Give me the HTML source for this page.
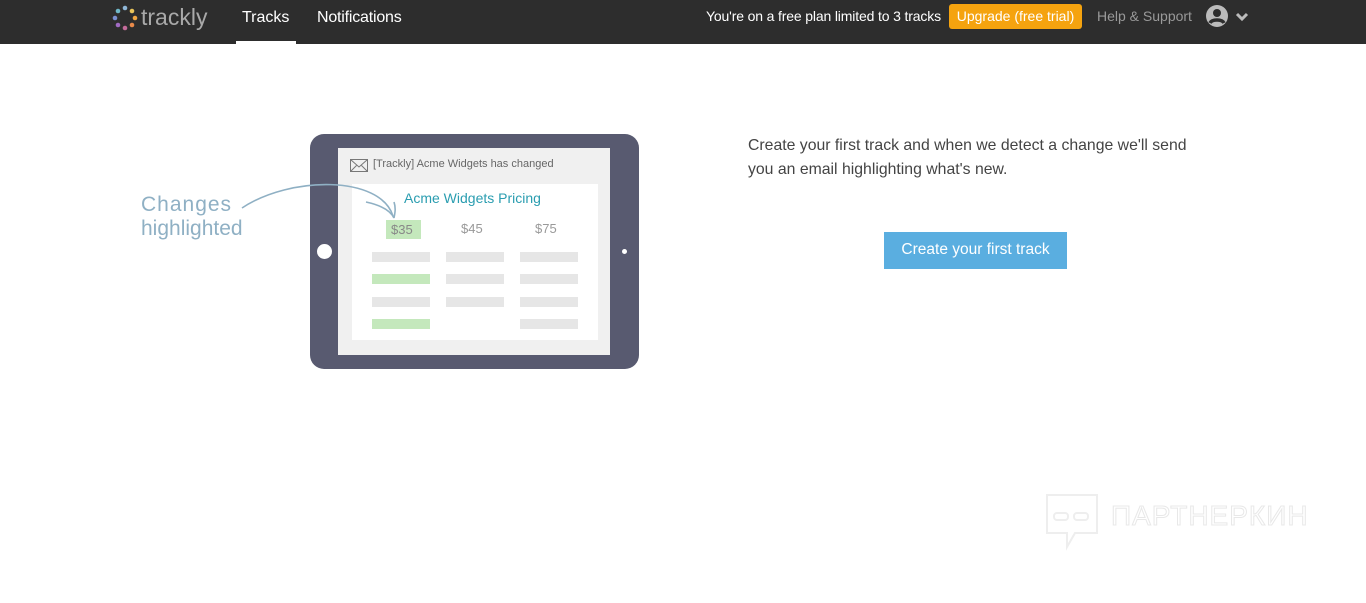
<!DOCTYPE html>
<html><head><meta charset="utf-8"><style>
*{margin:0;padding:0;box-sizing:border-box}
body{width:1366px;height:603px;background:#fff;font-family:"Liberation Sans",Arial,sans-serif;position:relative;overflow:hidden}
.nav{position:absolute;left:0;top:0;width:1366px;height:44px;background:#2d2d2d}
.a{position:absolute;white-space:nowrap}
.bar{position:absolute;height:10px;background:#e6e6e6}
.g{background:#c4e8bc}
</style></head><body>
<div class="nav">
 <svg class="a" style="left:112px;top:5px" width="26" height="26" viewBox="0 0 26 26">
  <circle cx="13" cy="3" r="2.3" fill="#8fb7d8"/><circle cx="20" cy="6" r="2.3" fill="#e8c35a"/>
  <circle cx="23" cy="13" r="2.3" fill="#f0a640"/><circle cx="20" cy="20" r="2.3" fill="#e88a4a"/>
  <circle cx="13" cy="23" r="2.3" fill="#c46b9a"/><circle cx="6" cy="20" r="2.3" fill="#a06bc2"/>
  <circle cx="3" cy="13" r="2.3" fill="#7a8fd0"/><circle cx="6" cy="6" r="2.3" fill="#6fb7c8"/>
 </svg>
 <div class="a" style="left:141px;top:4px;font-size:23px;color:#a9a9a9">trackly</div>
 <div class="a" style="left:242px;top:9px;font-size:16px;color:#fff">Tracks</div>
 <div class="a" style="left:236px;top:41px;width:60px;height:3px;background:#fff"></div>
 <div class="a" style="left:317px;top:9px;font-size:16px;color:#fff;letter-spacing:-0.2px">Notifications</div>
 <div class="a" style="left:706px;top:8px;font-size:14px;color:#fff;letter-spacing:-0.15px">You're on a free plan limited to 3 tracks</div>
 <div class="a" style="left:949px;top:4px;width:133px;height:25px;background:#f5a30f;border-radius:3px;color:#fff;font-size:14px;text-align:center;line-height:25px">Upgrade (free trial)</div>
 <div class="a" style="left:1097px;top:8px;font-size:14px;color:#999">Help &amp; Support</div>
 <svg class="a" style="left:1206px;top:5px" width="46" height="24" viewBox="0 0 46 24">
  <circle cx="11" cy="11" r="11" fill="#bbb"/><circle cx="11" cy="8" r="4" fill="#2d2d2d"/>
  <path d="M4 18c2-4 12-4 14 0" stroke="#2d2d2d" stroke-width="3.5" fill="none"/>
  <path d="M31 9l5 5 5-5" stroke="#bbb" stroke-width="3" fill="none"/>
 </svg>
</div>

<div class="a" style="left:310px;top:134px;width:329px;height:235px;background:#585a70;border-radius:14px"></div>
<div class="a" style="left:317px;top:244px;width:15px;height:15px;border-radius:50%;background:#fff"></div>
<div class="a" style="left:622px;top:249px;width:5px;height:5px;border-radius:50%;background:#fff"></div>
<div class="a" style="left:338px;top:148px;width:272px;height:207px;background:#f0f0f0"></div>
<svg class="a" style="left:350px;top:159px" width="18" height="13" viewBox="0 0 18 13"><rect x="0.5" y="0.5" width="17" height="12" fill="none" stroke="#777"/><path d="M.5 .5L9 8 17.5 .5M.5 12.5l6-6M17.5 12.5l-6-6" stroke="#777" fill="none"/></svg>
<div class="a" style="left:373px;top:158px;font-size:11px;color:#666">[Trackly] Acme Widgets has changed</div>
<div class="a" style="left:352px;top:184px;width:246px;height:156px;background:#fff"></div>
<div class="a" style="left:404px;top:190px;font-size:14px;color:#2a9db0">Acme Widgets Pricing</div>
<div class="a g" style="left:386px;top:220px;width:35px;height:19px"></div>
<div class="a" style="left:391px;top:222px;font-size:13px;color:#888">$35</div>
<div class="a" style="left:461px;top:221px;font-size:13px;color:#999">$45</div>
<div class="a" style="left:535px;top:221px;font-size:13px;color:#999">$75</div>
<div class="bar" style="left:372px;top:252px;width:58px"></div><div class="bar" style="left:446px;top:252px;width:58px"></div><div class="bar" style="left:520px;top:252px;width:58px"></div>
<div class="bar g" style="left:372px;top:274px;width:58px"></div><div class="bar" style="left:446px;top:274px;width:58px"></div><div class="bar" style="left:520px;top:274px;width:58px"></div>
<div class="bar" style="left:372px;top:297px;width:58px"></div><div class="bar" style="left:446px;top:297px;width:58px"></div><div class="bar" style="left:520px;top:297px;width:58px"></div>
<div class="bar g" style="left:372px;top:319px;width:58px"></div><div class="bar" style="left:520px;top:319px;width:58px"></div>

<svg class="a" style="left:140px;top:180px" width="270" height="70" viewBox="0 0 270 70">
 <path d="M102 28C150 -4 240 -5 253 36" stroke="#8fb0c4" stroke-width="1.6" fill="none"/>
 <path d="M226 22C240 25 250 30 254 38M254 38C255 33 256 28 254 22" stroke="#8fb0c4" stroke-width="1.6" fill="none"/>
 <text x="1" y="31" font-family="Liberation Sans, sans-serif" font-size="21" fill="#8fb0c4" letter-spacing="1">Changes</text>
 <text x="1" y="55" font-family="Liberation Sans, sans-serif" font-size="21" fill="#8fb0c4" letter-spacing="0">highlighted</text>
</svg>

<div class="a" style="left:748px;top:134px;font-size:15.8px;line-height:24px;color:#444">Create your first track and when we detect a change we'll send<br>you an email highlighting what's new.</div>
<div class="a" style="left:884px;top:232px;width:183px;height:37px;background:#5aaee0;color:#fff;font-size:15.5px;text-align:center;line-height:36px">Create your first track</div>

<svg class="a" style="left:1045px;top:493px" width="56" height="58" viewBox="0 0 56 58"><path d="M2 2h50v38H30l-8 14v-14H2z" fill="none" stroke="#eee" stroke-width="2"/><rect x="9" y="20" width="14" height="7" rx="3" fill="none" stroke="#eee" stroke-width="2"/><rect x="29" y="20" width="14" height="7" rx="3" fill="none" stroke="#eee" stroke-width="2"/></svg>
<div class="a" style="left:1111px;top:500px;font-size:28px;color:#fff;-webkit-text-stroke:1px #e8e8e8;letter-spacing:1px">ПАРТНЕРКИН</div>
</body></html>
